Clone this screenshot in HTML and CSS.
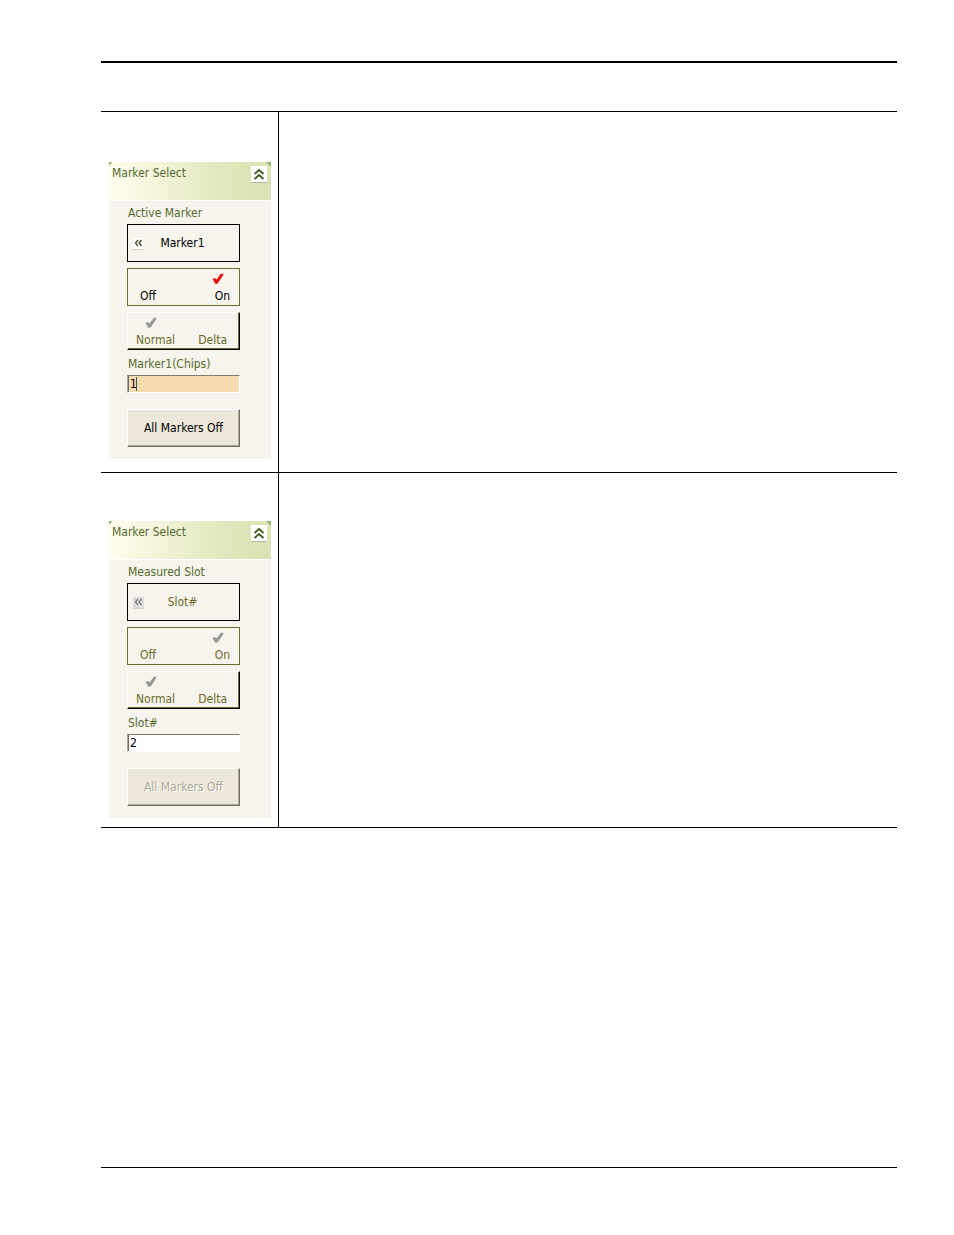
FILE: index.html
```html
<!DOCTYPE html>
<html lang="en">
  <head>
    <meta charset="UTF-8" />
    <meta name="viewport" content="width=device-width, initial-scale=1.0" />
    <title>Marker Select</title>
    <link rel="stylesheet" href="styles.css">
  </head>

  <body>
    <svg class="symbols" aria-hidden="true">
      <symbol id="check" viewBox="0 0 12 12">
        <path d="M0.5 6 L3 5 L4.5 6.5 L8.5 1 L11.5 0.5 L11 2.5 L6 10 L4.5 11 L3 10.5 Z" />
      </symbol>
      <symbol id="chevrons-up" viewBox="0 0 16 16">
        <path d="M3.5 8 L8 4 L12.5 8 M3.5 13 L8 9 L12.5 13" />
      </symbol>
      <symbol id="chevrons-left" viewBox="0 0 11 11">
        <path d="M5 2 L2.5 5 L5 8 M8.5 2 L6 5 L8.5 8" />
      </symbol>
    </svg>

    <div class="page">
      <header class="page-head"></header>

      <main class="rows">
        <section class="row">
          <div class="left">
            <div class="panel">
              <div class="panel-head">
                <h2 class="title">Marker Select</h2>
                <button class="collapse" aria-label="Collapse">
                  <svg><use href="#chevrons-up" /></svg>
                </button>
              </div>
              <div class="panel-body">
                <label class="label" for="active-marker">Active Marker</label>
                <button class="btn picker" id="active-marker">
                  <svg class="arrow"><use href="#chevrons-left" /></svg>
                  <span>Marker1</span>
                </button>
                <button class="btn toggle power">
                  <span class="option">Off</span>
                  <span class="option">
                    <svg class="check red"><use href="#check" /></svg>
                    On
                  </span>
                </button>
                <button class="btn toggle mode">
                  <span class="option">
                    <svg class="check"><use href="#check" /></svg>
                    Normal
                  </span>
                  <span class="option">Delta</span>
                </button>
                <label class="label" for="chips">Marker1(Chips)</label>
                <div class="field active">
                  <input type="text" id="chips" value="1" />
                  <span class="caret"></span>
                </div>
                <button class="btn all-off">All Markers Off</button>
              </div>
            </div>
          </div>
          <div class="right"></div>
        </section>

        <section class="row">
          <div class="left">
            <div class="panel">
              <div class="panel-head">
                <h2 class="title">Marker Select</h2>
                <button class="collapse" aria-label="Collapse">
                  <svg><use href="#chevrons-up" /></svg>
                </button>
              </div>
              <div class="panel-body">
                <label class="label" for="measured-slot">Measured Slot</label>
                <button class="btn picker" id="measured-slot" disabled>
                  <svg class="arrow"><use href="#chevrons-left" /></svg>
                  <span>Slot#</span>
                </button>
                <button class="btn toggle power" disabled>
                  <span class="option">Off</span>
                  <span class="option">
                    <svg class="check"><use href="#check" /></svg>
                    On
                  </span>
                </button>
                <button class="btn toggle mode" disabled>
                  <span class="option">
                    <svg class="check"><use href="#check" /></svg>
                    Normal
                  </span>
                  <span class="option">Delta</span>
                </button>
                <label class="label" for="slot">Slot#</label>
                <div class="field">
                  <input type="text" id="slot" value="2" />
                </div>
                <button class="btn all-off" disabled>All Markers Off</button>
              </div>
            </div>
          </div>
          <div class="right"></div>
        </section>
      </main>

      <footer class="page-foot"></footer>
    </div>
  </body>
</html>
```
FILE: styles.css
```css
* {
  padding: 0;
  margin: 0;
  box-sizing: border-box;
}

body {
  background-color: #fff;
  font-family: "DejaVu Sans Condensed", "DejaVu Sans", sans-serif;
  font-size: 12px;
  line-height: 16px;
}

button,
input {
  font: inherit;
}

input:focus {
  outline: 0;
}

.symbols {
  display: none;
}

.page {
  min-height: 100vh;
  padding: 61px 57px 67px 101px;
  display: flex;
  flex-direction: column;
}

.page-head {
  height: 50px;
  border-top: 2px solid #000;
}

.page-foot {
  margin-top: auto;
  border-top: 1px solid #000;
}

.rows {
  border-top: 1px solid #000;
}

.row {
  display: flex;
  border-bottom: 1px solid #000;
}

.left {
  width: 178px;
  padding: 50px 7px 13px 8px;
  border-right: 1px solid #000;
}

.row + .row .left {
  padding: 48px 7px 9px 8px;
}

.right {
  flex: 1;
}

/* panel */
.panel {
  background-color: #f7f4ed;
}

.panel-head {
  height: 39px;
  padding: 3px 4px 0 3px;
  display: flex;
  justify-content: space-between;
  align-items: flex-start;
  border-bottom: 1px solid #fff;
  /* green notches in the top corners */
  background:
    linear-gradient(135deg, #8fb573 2px, transparent 3px),
    linear-gradient(225deg, #8fb573 3px, transparent 4px),
    linear-gradient(to right, #fffdee, #f1f2d6 35%, #e0e7bd 70%, #dae3b3);
}

.title {
  font-size: 12px;
  font-weight: normal;
  color: #556b2f;
}

.collapse {
  width: 16px;
  height: 16px;
  margin-top: 1px;
  border: 0;
  background-color: #fff;
  box-shadow: 0 1px 0 #b5b898;
}

.collapse svg {
  display: block;
  width: 16px;
  height: 16px;
  fill: none;
  stroke: #3d5a22;
  stroke-width: 1.8;
}

.panel-body {
  padding: 4px 31px 12px 18px;
  display: flex;
  flex-direction: column;
}

.label {
  padding-left: 1px;
  margin-bottom: 3px;
  color: #556b2f;
}

.btn {
  height: 38px;
  background-color: #f7f4ed;
  color: #000;
}

.picker {
  display: grid;
  grid-template-columns: 11px 1fr 13px;
  align-items: center;
  padding: 0 5px;
  margin-bottom: 6px;
  border: 1px solid #000;
}

.arrow {
  width: 11px;
  height: 11px;
  background-color: #fff;
  box-shadow: 0 1px 0 #d5d2c4;
  fill: none;
  stroke: #3d4a22;
  stroke-width: 1.3;
}

.picker:disabled .arrow {
  background-color: #dcdcdc;
  stroke: #808080;
}

.toggle {
  display: flex;
  justify-content: space-between;
  align-items: flex-end;
  margin-bottom: 6px;
}

.power {
  padding: 0 9px 1px 12px;
  border: 1px solid #6b6b2a;
}

.mode {
  padding: 0 12px 1px 8px;
  border: 1px solid #000;
  border-top-color: #fff;
  border-left-color: #fff;
  box-shadow: inset -1px -1px 0 #6b6b2a;
  color: #6b6b2a;
}

.picker:disabled,
.power:disabled {
  color: #6b6b2a;
}

.option {
  display: flex;
  flex-direction: column;
  align-items: center;
}

.check {
  width: 12px;
  height: 12px;
  margin: 0 5px 3px -4px;
  fill: #999;
}

.red {
  fill: #e8141c;
}

.field {
  position: relative;
  height: 18px;
  margin-bottom: 16px;
  border: 1px solid #fff;
  border-top-color: #7f7b6d;
  border-left-color: #aca899;
}

.field input {
  display: block;
  width: 100%;
  height: 16px;
  padding-left: 1px;
  border: 0;
  border-left: 1px solid #716f64;
  background-color: #fff;
  color: #000;
}

.active input {
  background-color: #f5dcb3;
}

/* text cursor after the value, hidden once the box has its own */
.caret {
  position: absolute;
  top: 1px;
  left: 8px;
  width: 1px;
  height: 14px;
  background-color: #55534a;
  pointer-events: none;
}

input:focus + .caret {
  display: none;
}

.all-off {
  border: 1px solid #716f64;
  border-top-color: #fff;
  border-left-color: #fff;
  box-shadow: inset -1px -1px 0 #aca899;
  background-color: #ece7da;
}

.all-off:disabled {
  color: #aca899;
  text-shadow: 1px 1px 0 #fff;
}
```
